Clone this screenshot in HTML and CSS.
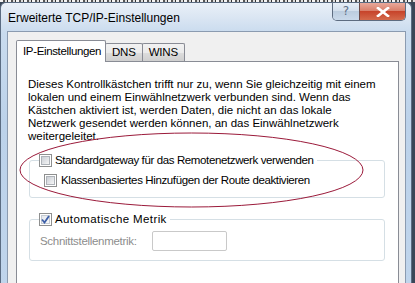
FILE: index.html
```html
<!DOCTYPE html>
<html lang="de">
<head>
<meta charset="utf-8">
<link rel="stylesheet" href="styles.css">
</head>
<body>
<div class="screen">
  <div class="behind"></div>
  <div class="window">
    <div class="titlebar">
      <span class="title">Erweiterte TCP/IP-Einstellungen</span>
      <div class="caption-buttons">
        <div class="btn-help">?</div>
        <div class="btn-close">
          <svg width="14" height="10" viewBox="0 0 14 10"><path d="M2 1 L12 9 M12 1 L2 9" stroke="#fff" stroke-width="2.6" stroke-linecap="square" fill="none"/></svg>
        </div>
      </div>
    </div>
    <div class="client">
      <div class="tabs">
        <div class="tab active">IP-Einstellungen</div>
        <div class="tab">DNS</div>
        <div class="tab">WINS</div>
      </div>
      <div class="panel">
        <p class="info">Dieses Kontrollkästchen trifft nur zu, wenn Sie gleichzeitig mit einem<br>lokalen und einem Einwählnetzwerk verbunden sind. Wenn das<br>Kästchen aktiviert ist, werden Daten, die nicht an das lokale<br>Netzwerk gesendet werden können, an das Einwählnetzwerk<br>weitergeleitet.</p>
        <fieldset class="group g1">
          <legend><span class="cb"></span><span class="tight">Standardgateway für das Remotenetzwerk verwenden</span></legend>
          <div class="row sub"><span class="cb"></span><span class="tight">Klassenbasiertes Hinzufügen der Route deaktivieren</span></div>
        </fieldset>
        <fieldset class="group g2">
          <legend><span class="cb checked"><svg width="9" height="9" viewBox="0 0 9 9"><path d="M1 4.5 L3.5 7.5 L8 1" stroke="#3d5fa8" stroke-width="1.8" fill="none"/></svg></span><span class="wide">Automatische Metrik</span></legend>
          <div class="metric-row"><span class="disabled">Schnittstellenmetrik:</span><span class="input"></span></div>
        </fieldset>
      </div>
    </div>
  </div>
  <svg class="annotation" width="415" height="283" viewBox="0 0 415 283"><ellipse cx="191.5" cy="170" rx="171.5" ry="37" fill="none" stroke="#9b1a3a" stroke-width="1"/></svg>
</div>
</body>
</html>
```
FILE: styles.css
```css
* { box-sizing: border-box; }
html, body { margin: 0; padding: 0; }
body {
  width: 415px;
  height: 283px;
  overflow: hidden;
  background: #3a4758;
  font-family: "Liberation Sans", Arial, sans-serif;
  font-size: 11.5px;
  color: #000;
}
.screen {
  position: relative;
  width: 415px;
  height: 283px;
  overflow: hidden;
}
.behind {
  height: 2px;
  background: repeating-linear-gradient(90deg, #f4f4f4 0 3px, #555 3px 5px, #ddd 5px 7px, #333 7px 8px);
}
.window {
  width: 412px;
  height: 300px;
  background: linear-gradient(180deg, #e9f0f8 0, #dbe6f3 14px, #c9dbee 30px, #bcd2ea 120px, #c0d5ec 300px);
  border: 1px solid #5b6c82;
  border-bottom: none;
  border-radius: 6px 6px 0 0;
  display: flex;
  flex-direction: column;
}
.titlebar {
  height: 28px;
  display: flex;
  align-items: flex-start;
  padding-left: 7px;
}
.title {
  padding-top: 8px;
  line-height: 15px;
  font-size: 12px;
  color: #000;
}
.caption-buttons {
  margin-left: auto;
  margin-right: 5px;
  display: flex;
  border: 1px solid #5d6c80;
  border-top: none;
  border-radius: 0 0 5px 5px;
  overflow: hidden;
  height: 18px;
}
.btn-help {
  width: 27px;
  height: 17px;
  background: linear-gradient(180deg, #e6eef7 0, #d3dfec 45%, #bccddf 50%, #cadaeb 100%);
  color: #5f6f86;
  font-family: "DejaVu Sans", sans-serif;
  font-size: 12px;
  line-height: 17px;
  text-align: center;
  border-right: 1px solid #6a4a48;
}
.btn-close {
  width: 45px;
  height: 17px;
  background: linear-gradient(180deg, #e9a99b 0, #d9806b 45%, #c7442b 50%, #d46a4c 100%);
  display: flex;
  align-items: center;
  justify-content: center;
}
.client {
  margin-left: 6px;
  width: 399px;
  flex: 1;
  background: #f0f0f0;
  border: 1px solid #8b9bb0;
  border-bottom: none;
}
.tabs {
  display: flex;
  align-items: flex-end;
  padding-left: 8px;
  margin-top: 7px;
  height: 22px;
  position: relative;
  z-index: 1;
  white-space: nowrap;
}
.tab {
  height: 18px;
  padding: 0 6px;
  line-height: 17px;
  border: 1px solid #898c95;
  border-bottom: none;
  margin-left: -1px;
  background: linear-gradient(180deg, #f2f2f2 0, #ebebeb 50%, #dddddd 51%, #cfcfcf 100%);
  border-radius: 2px 2px 0 0;
  letter-spacing: -0.2px;
}
.tab.active {
  height: 22px;
  margin-left: 0;
  width: 90px;
  padding: 0 0 0 6px;
  line-height: 20px;
  background: #fff;
  margin-bottom: -1px;
  letter-spacing: -0.35px;
}
.panel {
  margin-left: 8px;
  width: 383px;
  height: 240px;
  background: #fff;
  border: 1px solid #898c95;
  padding: 16px 0 0 11px;
}
.info {
  margin: 0;
  line-height: 13px;
}
.group {
  margin: 10px 0 0 1px;
  width: 356px;
  border: 1px solid #d5dfe5;
  border-radius: 3px;
  padding: 0 8px 9px 9px;
}
.group legend {
  padding: 0 3px 0 0;
  display: flex;
  align-items: center;
  gap: 3px;
  line-height: 15px;
}
.tight { letter-spacing: -0.38px; }
.wide { letter-spacing: 0.4px; }
.cb {
  width: 13px;
  height: 13px;
  border: 1px solid #8e8f8f;
  background: #fff;
  padding: 1px;
  display: inline-flex;
  flex-shrink: 0;
}
.cb::before {
  content: "";
  flex: 1;
  border: 1px solid #aeb3b9;
  background: linear-gradient(135deg, #cbcfd5 0, #e4e6e9 60%, #f6f6f6 100%);
}
.cb.checked { position: relative; }
.cb.checked::before {
  border-color: #c5cbd3;
  background: linear-gradient(135deg, #e4e8ee, #f8f8f8);
}
.cb.checked svg {
  position: absolute;
  left: 1px;
  top: 1px;
}
.row {
  display: flex;
  align-items: center;
  gap: 4px;
  line-height: 15px;
}
.row.sub {
  margin: 5px 0 0 5px;
}
.g1 { padding-bottom: 9px; }
.g2 { margin-top: 14px; }
.metric-row {
  display: flex;
  align-items: center;
  margin-top: 4px;
  padding-left: 1px;
}
.disabled {
  color: #8d8d8d;
  width: 112px;
  letter-spacing: -0.3px;
}
.input {
  width: 75px;
  height: 20px;
  border: 1px solid #c9c9c9;
  border-radius: 2px;
  background: #fff;
}
.annotation {
  position: absolute;
  left: 0;
  top: 0;
  pointer-events: none;
}
```
